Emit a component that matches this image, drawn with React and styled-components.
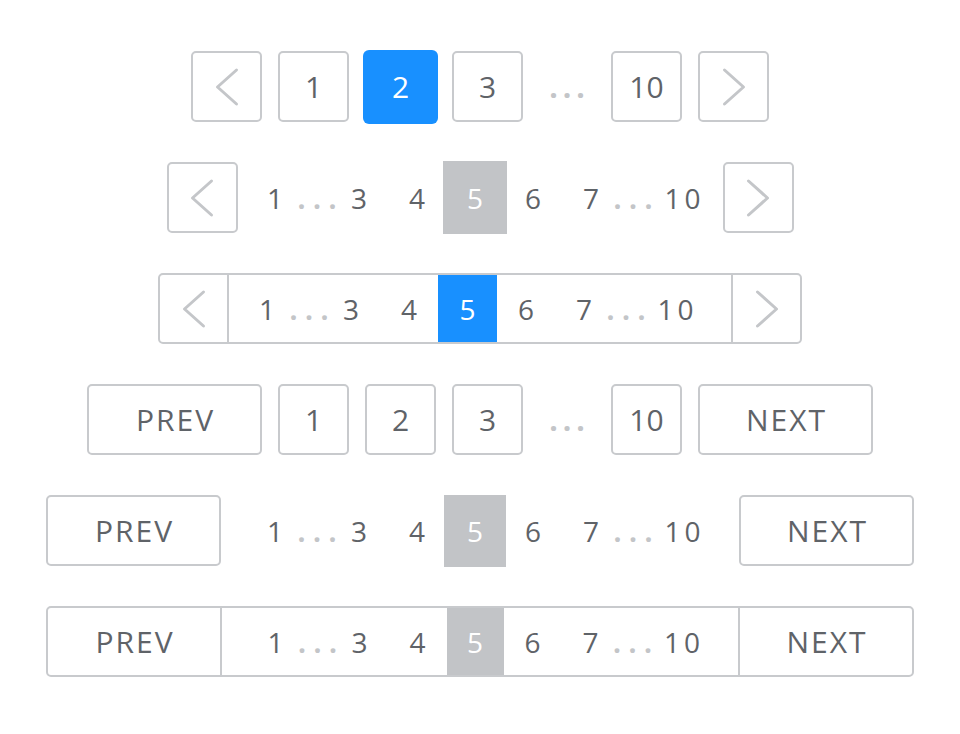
import styled, { createGlobalStyle } from "styled-components";

const GlobalStyle = createGlobalStyle`
  body {
    margin: 0;
    background: #fff;
    font-family: "Open Sans", "Liberation Sans", sans-serif;
  }
`;

const TEXT = "#5f6368";
const LINE = "#c8cacd";
const DOTS = "#c3c5c8";
const BLUE = "#1890ff";
const GRAY = "#c2c4c7";

const Page = styled.div`
  display: flex;
  flex-direction: column;
  align-items: center;
  gap: 40px;
  padding-top: 51px;
`;

const Row = styled.div`
  display: flex;
  align-items: center;
  gap: ${(p) => p.$gap ?? 16}px;
  height: 71px;
`;

const Box = styled.div`
  box-sizing: border-box;
  flex: none;
  width: ${(p) => p.$w || 71}px;
  height: 71px;
  border: 2px solid ${LINE};
  border-radius: 5px;
  display: flex;
  align-items: center;
  justify-content: center;
  font-size: 30px;
  color: ${TEXT};
  letter-spacing: ${(p) => (p.$label ? "2px" : "0")};
  padding-left: ${(p) => (p.$label ? "2px" : "0")};
`;

const ActiveBox = styled.div`
  flex: none;
  width: 75px;
  height: 74px;
  margin: 0 -2px;
  border-radius: 6px;
  background: ${BLUE};
  color: #fff;
  display: flex;
  align-items: center;
  justify-content: center;
  font-size: 30px;
`;

const Ellipsis = styled.div`
  flex: none;
  width: 56px;
  display: flex;
  justify-content: center;
  font-size: 30px;
  font-weight: 700;
  color: ${DOTS};
  letter-spacing: 5px;
  padding-left: 5px;
  box-sizing: border-box;
`;

const Group = styled.div`
  display: flex;
  align-items: center;
  height: 100%;
  flex: none;
  margin: 0 ${(p) => p.$m || 0}px;
`;

const Cell = styled.span`
  flex: none;
  box-sizing: border-box;
  width: ${(p) => p.$w || 58}px;
  display: flex;
  align-items: center;
  justify-content: center;
  font-size: 28px;
  color: ${TEXT};
  letter-spacing: ${(p) => p.$ls || 0}px;
  padding-left: ${(p) => p.$pl || 0}px;
`;

const Dots = styled(Cell)`
  color: ${DOTS};
  font-weight: 700;
  margin: 0 -16px;
  letter-spacing: 7.5px;
  padding-left: 7.5px;
`;

const Current = styled(Cell)`
  align-self: center;
  height: ${(p) => p.$h}px;
  margin: 0 ${(p) => p.$m || 0}px;
  background: ${(p) => p.$bg};
  color: #fff;
`;

const Bar = styled.div`
  display: flex;
  align-items: stretch;
  height: 71px;
  box-sizing: border-box;
  border: 2px solid ${LINE};
  border-radius: 5px;
  overflow: hidden;
`;

const BarEnd = styled.div`
  flex: none;
  width: ${(p) => p.$w}px;
  display: flex;
  align-items: center;
  justify-content: center;
  font-size: 30px;
  color: ${TEXT};
  letter-spacing: 2px;
  padding-left: ${(p) => (p.$label ? "2px" : "0")};
  box-sizing: border-box;
`;

const BarMiddle = styled.div`
  flex: none;
  width: ${(p) => p.$w}px;
  display: flex;
  justify-content: ${(p) => (p.$start ? "flex-start" : "center")};
  padding-left: ${(p) => p.$pl || 0}px;
  box-sizing: border-box;
  border-left: 2px solid ${LINE};
  border-right: 2px solid ${LINE};
`;

const Chevron = ({ dir }) => (
  <svg width="24" height="40" viewBox="0 0 24 40">
    <path
      d={dir === "left" ? "M21.5 3 L2.5 20 L21.5 37" : "M2.5 3 L21.5 20 L2.5 37"}
      fill="none"
      stroke="#c4c6c9"
      strokeWidth="3"
      strokeLinecap="round"
      strokeLinejoin="round"
    />
  </svg>
);

// 1 … 3 4 [5] 6 7 … 10
const Pages = ({ bg, w, h, m }) => (
  <>
    <Cell>1</Cell>
    <Dots>...</Dots>
    <Cell>3</Cell>
    <Cell>4</Cell>
    <Current $bg={bg} $w={w} $h={h} $m={m}>
      5
    </Current>
    <Cell>6</Cell>
    <Cell>7</Cell>
    <Dots>...</Dots>
    <Cell $w={68} $ls={4} $pl={9}>
      10
    </Cell>
  </>
);

export default function App() {
  return (
    <>
      <GlobalStyle />
      <Page>
        <Row>
          <Box>
            <Chevron dir="left" />
          </Box>
          <Box>1</Box>
          <ActiveBox>2</ActiveBox>
          <Box>3</Box>
          <Ellipsis>...</Ellipsis>
          <Box>10</Box>
          <Box>
            <Chevron dir="right" />
          </Box>
        </Row>

        <Row $gap={0}>
          <Box>
            <Chevron dir="left" />
          </Box>
          <Group $m={8.5}>
            <Pages bg={GRAY} w={64} h={73} m={-3} />
          </Group>
          <Box>
            <Chevron dir="right" />
          </Box>
        </Row>

        <Bar>
          <BarEnd $w={67}>
            <Chevron dir="left" />
          </BarEnd>
          <BarMiddle $w={506} $start $pl={9}>
            <Group>
              <Pages bg={BLUE} w={59} h={67} m={0} />
            </Group>
          </BarMiddle>
          <BarEnd $w={67}>
            <Chevron dir="right" />
          </BarEnd>
        </Bar>

        <Row>
          <Box $w={175} $label>
            PREV
          </Box>
          <Box>1</Box>
          <Box>2</Box>
          <Box>3</Box>
          <Ellipsis>...</Ellipsis>
          <Box>10</Box>
          <Box $w={175} $label>
            NEXT
          </Box>
        </Row>

        <Row $gap={0}>
          <Box $w={175} $label>
            PREV
          </Box>
          <Group $m={25}>
            <Pages bg={GRAY} w={62} h={72} m={-2} />
          </Group>
          <Box $w={175} $label>
            NEXT
          </Box>
        </Row>

        <Bar>
          <BarEnd $w={172} $label>
            PREV
          </BarEnd>
          <BarMiddle $w={520}>
            <Group>
              <Pages bg={GRAY} w={57} h={67} m={0} />
            </Group>
          </BarMiddle>
          <BarEnd $w={172} $label>
            NEXT
          </BarEnd>
        </Bar>
      </Page>
    </>
  );
}
